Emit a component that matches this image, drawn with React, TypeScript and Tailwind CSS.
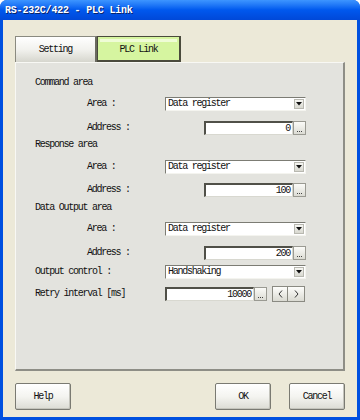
import React from "react";

const mono = "font-['Liberation_Mono','DejaVu_Sans_Mono',monospace] text-[10px] tracking-[-1.25px] text-[#111]";

function DotsButton({ className = "" }: { className?: string }) {
    return (
        <div className={`flex h-[14px] w-[13px] items-end justify-center border border-[#9a9a92] bg-gradient-to-b from-[#fbfbf8] to-[#dcdcd4] pb-[2px] ${className}`}>
            <div className="flex gap-[1px]">
                <span className="h-[1px] w-[1px] bg-[#444]" />
                <span className="h-[1px] w-[1px] bg-[#444]" />
                <span className="h-[1px] w-[1px] bg-[#444]" />
            </div>
        </div>
    );
}

function Select({ value }: { value: string }) {
    return (
        <div className="flex h-[14px] w-[141px] items-center border-t border-l border-[#7c7c74] border-b border-r border-b-[#f4f4ef] border-r-[#f4f4ef] bg-white">
            <span className={`${mono} grow pl-[2px] leading-none`}>{value}</span>
            <div className="mr-[1px] flex h-[10px] w-[10px] items-center justify-center border border-[#b8b8b0] bg-gradient-to-b from-[#f6f6f2] to-[#d8d8d0]">
                <svg width="6" height="4" viewBox="0 0 6 4">
                    <path d="M0 0h6L3 3.5z" fill="#111" />
                </svg>
            </div>
        </div>
    );
}

function NumberInput({ value, width }: { value: string; width: string }) {
    return (
        <div className={`flex h-[14px] items-center justify-end border-t-2 border-l-2 border-[#505048] border-b border-r border-b-[#d8d8d0] border-r-[#d8d8d0] bg-white pr-[2px] ${width}`}>
            <span className={`${mono} leading-none`}>{value}</span>
        </div>
    );
}

function Heading({ text, className = "" }: { text: string; className?: string }) {
    return (
        <div className={`flex h-[12px] items-center pl-[19px] ${className}`}>
            <span className={`${mono} leading-none`}>{text}</span>
        </div>
    );
}

function SubRow({ label, children, className = "" }: { label: string; children: React.ReactNode; className?: string }) {
    return (
        <div className={`flex h-[14px] items-center pl-[71px] ${className}`}>
            <span className={`${mono} w-[78px] leading-none`}>{label}</span>
            {children}
        </div>
    );
}

function AddressControl({ value }: { value: string }) {
    return (
        <div className="flex w-[141px] justify-end">
            <NumberInput value={value} width="w-[89px]" />
            <DotsButton />
        </div>
    );
}

function DialogButton({ label }: { label: string }) {
    return (
        <button className={`${mono} flex h-[27px] w-[56px] items-center justify-center rounded-[2px] border border-[#7a7a72] bg-gradient-to-b from-[#ffffff] via-[#f4f4f0] to-[#dcdcd4] shadow-[inset_-1px_-1px_0_#c4c4bc]`}>
            {label}
        </button>
    );
}

export default function App() {
    return (
        <div className="flex h-[420px] w-[360px] flex-col overflow-hidden rounded-t-[7px] bg-[#0050e0]">
            {/* title bar */}
            <div className="flex h-[20px] items-center bg-gradient-to-b from-[#3d95ff] via-[#0058ee] to-[#0048d8] pl-[5px]">
                <span className="font-['Liberation_Mono','DejaVu_Sans_Mono',monospace] text-[10px] font-bold tracking-[-0.2px] text-white [text-shadow:1px_1px_0_#0a246a]">
                    RS-232C/422 - PLC Link
                </span>
            </div>

            {/* window body */}
            <div className="mx-[3px] mb-[3px] flex grow flex-col bg-[#ece9d8] px-[12px] pt-[16px]">
                {/* tabs */}
                <div className="flex h-[26px]">
                    <div className={`${mono} flex w-[82px] items-center justify-center border-t border-l border-[#8a8a80] border-r-2 border-r-[#6a6a60] bg-gradient-to-b from-[#ffffff] via-[#f2f2ee] to-[#d6d6ce]`}>
                        Setting
                    </div>
                    <div className={`${mono} flex w-[84px] flex-col border-t border-l border-[#4a4a3c] border-r-2 border-b-2 border-r-[#4a4a3c] border-b-[#4a4a3c] bg-[#d6f5a0]`}>
                        <div className="mx-[2px] mt-[2px] h-[3px] bg-[#effcd6]" />
                        <div className="flex grow items-center justify-center pb-[3px]">PLC Link</div>
                    </div>
                </div>

                {/* panel */}
                <div className="flex h-[309px] flex-col border-l border-t border-[#f8f8f4] border-r-2 border-b-2 border-r-[#8e8e86] border-b-[#8e8e86] bg-[#e3e3de]">
                    <Heading text="Command area" className="mt-[14px]" />
                    <SubRow label="Area :" className="mt-[8px]">
                        <Select value="Data register" />
                    </SubRow>
                    <SubRow label="Address :" className="mt-[10px]">
                        <AddressControl value="0" />
                    </SubRow>

                    <Heading text="Response area" className="mt-[4px]" />
                    <SubRow label="Area :" className="mt-[9px]">
                        <Select value="Data register" />
                    </SubRow>
                    <SubRow label="Address :" className="mt-[9px]">
                        <AddressControl value="100" />
                    </SubRow>

                    <Heading text="Data Output area" className="mt-[5px]" />
                    <SubRow label="Area :" className="mt-[8px]">
                        <Select value="Data register" />
                    </SubRow>
                    <SubRow label="Address :" className="mt-[10px]">
                        <AddressControl value="200" />
                    </SubRow>

                    <div className="mt-[5px] flex h-[14px] items-center pl-[19px]">
                        <span className={`${mono} w-[130px] leading-none`}>Output control :</span>
                        <Select value="Handshaking" />
                    </div>

                    <div className="mt-[7px] flex h-[16px] items-center pl-[19px]">
                        <span className={`${mono} w-[130px] leading-none`}>Retry interval [ms]</span>
                        <NumberInput value="10000" width="w-[89px]" />
                        <DotsButton />
                        <div className="ml-[5px] flex">
                            <button className={`${mono} flex h-[16px] w-[16px] items-center justify-center border border-[#8a8a82] bg-gradient-to-b from-[#fdfdfb] to-[#dadad2]`}>
                                <svg width="5" height="8" viewBox="0 0 5 8"><path d="M4 0.5L1 4l3 3.5" fill="none" stroke="#333" strokeWidth="1" /></svg>
                            </button>
                            <button className={`${mono} flex h-[16px] w-[17px] items-center justify-center border border-l-0 border-[#8a8a82] bg-gradient-to-b from-[#fdfdfb] to-[#dadad2]`}>
                                <svg width="5" height="8" viewBox="0 0 5 8"><path d="M1 0.5L4 4l-3 3.5" fill="none" stroke="#333" strokeWidth="1" /></svg>
                            </button>
                        </div>
                    </div>
                </div>

                {/* footer buttons */}
                <div className="mt-[12px] flex">
                    <DialogButton label="Help" />
                    <div className="grow" />
                    <DialogButton label="OK" />
                    <div className="ml-[18px]">
                        <DialogButton label="Cancel" />
                    </div>
                </div>
            </div>
        </div>
    );
}
